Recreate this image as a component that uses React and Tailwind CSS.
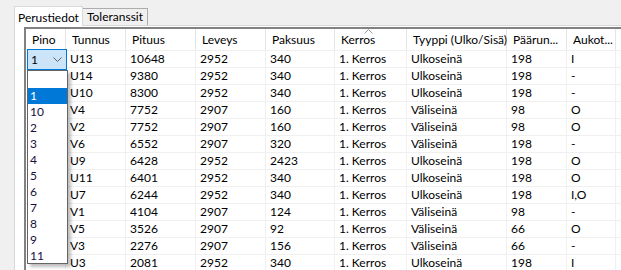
import React from 'react';

const cols = [
  { key: 'pino', label: 'Pino', w: 'w-[40px]' },
  { key: 'tunnus', label: 'Tunnus', w: 'w-[60px]' },
  { key: 'pituus', label: 'Pituus', w: 'w-[70px]' },
  { key: 'leveys', label: 'Leveys', w: 'w-[70px]' },
  { key: 'paksuus', label: 'Paksuus', w: 'w-[69px]' },
  { key: 'kerros', label: 'Kerros', w: 'w-[72px]' },
  { key: 'tyyppi', label: 'Tyyppi (Ulko/Sisä)', w: 'w-[100px]' },
  { key: 'paarunko', label: 'Päärun...', w: 'w-[60px]' },
  { key: 'aukot', label: 'Aukot...', w: 'w-[49px]' },
];

const rows = [
  ['U13', '10648', '2952', '340', 'Ulkoseinä', '198', 'I'],
  ['U14', '9380', '2952', '340', 'Ulkoseinä', '198', '-'],
  ['U10', '8300', '2952', '340', 'Ulkoseinä', '198', '-'],
  ['V4', '7752', '2907', '160', 'Väliseinä', '98', 'O'],
  ['V2', '7752', '2907', '160', 'Väliseinä', '98', 'O'],
  ['V6', '6552', '2907', '320', 'Väliseinä', '198', '-'],
  ['U9', '6428', '2952', '2423', 'Ulkoseinä', '198', 'O'],
  ['U11', '6401', '2952', '340', 'Ulkoseinä', '198', 'O'],
  ['U7', '6244', '2952', '340', 'Ulkoseinä', '198', 'I,O'],
  ['V1', '4104', '2907', '124', 'Väliseinä', '98', '-'],
  ['V5', '3526', '2907', '92', 'Väliseinä', '66', 'O'],
  ['V3', '2276', '2907', '156', 'Väliseinä', '66', '-'],
  ['U3', '2081', '2952', '340', 'Ulkoseinä', '198', 'I'],
];

const pinoOptions = ['', '1', '10', '2', '3', '4', '5', '6', '7', '8', '9', '11'];

const Chevron = ({ up }) => (
  <svg width="9" height="5" viewBox="0 0 9 5" fill="none">
    <path d={up ? 'M0.5 4.5L4.5 0.5L8.5 4.5' : 'M0.5 0.5L4.5 4.5L8.5 0.5'} stroke="currentColor" strokeWidth="1" />
  </svg>
);

const Cell = ({ w, children }) => (
  <div className={`${w} shrink-0 h-full border-r border-[#f0f0f0] pl-[4px] flex items-center whitespace-nowrap overflow-hidden`}>
    {children}
  </div>
);

export default function App() {
  return (
    <div
      className="w-[621px] h-[270px] bg-[#f0f0f0] overflow-hidden relative flex flex-col text-[12px] text-black"
      style={{ fontFamily: 'Lato, "Noto Sans", "Liberation Sans", sans-serif' }}
    >
      {/* tabs */}
      <div className="flex items-end pl-[14px] pt-[5px] h-[25px] shrink-0">
        <div className="h-[20px] px-[3px] pt-[2px] bg-white border border-b-0 border-[#d9d9d9] flex items-center relative top-[1px] whitespace-nowrap">
          Perustiedot
        </div>
        <div className="h-[17px] px-[4px] bg-[#f0f0f0] border border-b-0 border-l-0 border-[#adadad] flex items-center whitespace-nowrap">
          Toleranssit
        </div>
      </div>

      {/* tab page */}
      <div className="ml-[14px] flex-1 bg-white border-l border-t border-[#d9d9d9] pl-[9px] pt-[1px]">
        <div className="h-full border-l-2 border-t-2 border-[#828282] bg-white">
          {/* header */}
          <div className="flex h-[22px] border-b border-[#f0f0f0]">
            {cols.map((c) => (
              <div
                key={c.key}
                className={`${c.w} shrink-0 h-full border-r border-[#e5e5e5] pl-[6px] flex items-center whitespace-nowrap relative`}
              >
                {c.key === 'kerros' && (
                  <span className="absolute left-[29px] top-[0px] text-[#a0a0a0] leading-none">
                    <Chevron up />
                  </span>
                )}
                {c.label}
              </div>
            ))}
          </div>

          {/* rows */}
          {rows.map((r, i) => (
            <div key={i} className="flex h-[17px] border-b border-[#f0f0f0]">
              <Cell w="w-[40px]">{''}</Cell>
              <Cell w="w-[60px]">{r[0]}</Cell>
              <Cell w="w-[70px]">{r[1]}</Cell>
              <Cell w="w-[70px]">{r[2]}</Cell>
              <Cell w="w-[69px]">{r[3]}</Cell>
              <Cell w="w-[72px]">1. Kerros</Cell>
              <Cell w="w-[100px]">{r[4]}</Cell>
              <Cell w="w-[60px]">{r[5]}</Cell>
              <Cell w="w-[49px]">{r[6]}</Cell>
            </div>
          ))}
        </div>
      </div>

      {/* combobox in edit mode */}
      <div className="absolute left-[27px] top-[49px] w-[40px] h-[21px] bg-[#cce4f7] border border-[#0078d7] flex items-center justify-between pl-[3px] pr-[4px]">
        <span>1</span>
        <span className="text-[#606060]">
          <Chevron />
        </span>
      </div>

      {/* dropdown list */}
      <div className="absolute left-[27px] top-[70px] w-[41px] h-[194px] bg-white border border-[#646464] shadow-[3px_3px_3px_rgba(0,0,0,0.25)] flex flex-col pt-[1px]">
        {pinoOptions.map((o, i) => (
          <div
            key={i}
            className={`h-[16px] shrink-0 pl-[2px] flex items-center ${o === '1' ? 'bg-[#0078d7] text-white' : 'text-[#1a0f3c]'}`}
          >
            {o}
          </div>
        ))}
      </div>
    </div>
  );
}
